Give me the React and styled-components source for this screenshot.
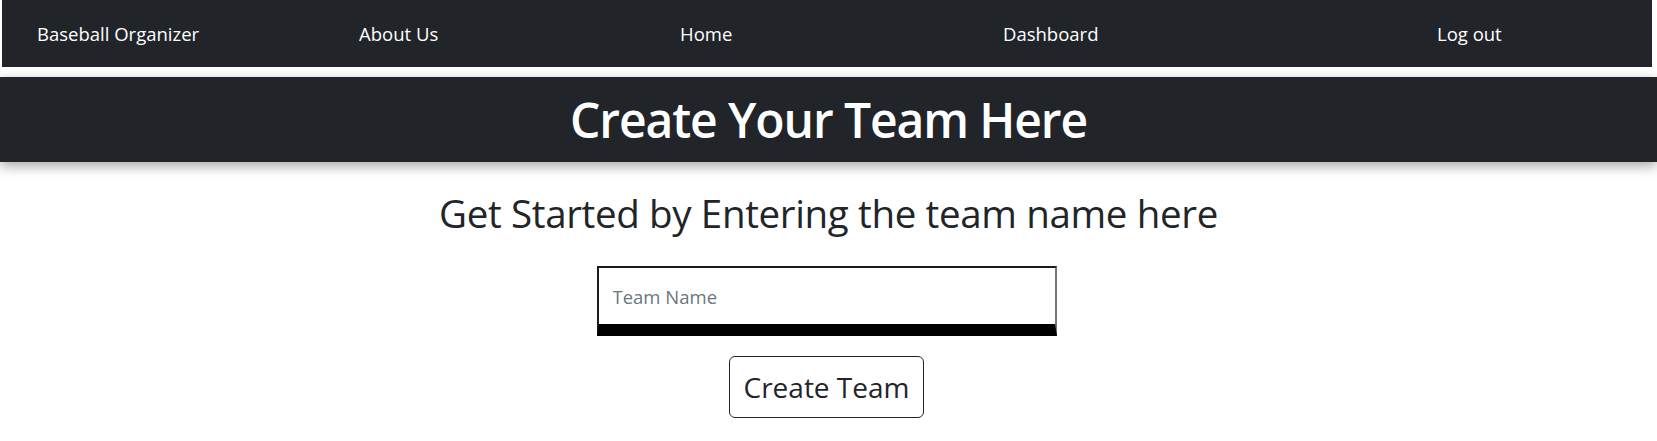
import React from "react";
import styled, { createGlobalStyle } from "styled-components";

const GlobalStyle = createGlobalStyle`
  body {
    margin: 0;
    background: #fff;
    font-family: "Open Sans", "Noto Sans", sans-serif;
    color: #212529;
  }
  * { box-sizing: border-box; }
`;

const Nav = styled.nav`
  display: flex;
  align-items: center;
  height: 67px;
  margin: 0 5px 0 2px;
  padding-left: 35px;
  padding-bottom: 1px;
  background-color: #212529;
`;

const NavLink = styled.a`
  flex: 0 0 auto;
  width: ${(p) => (p.w ? `${p.w}px` : "auto")};
  color: #fff;
  font-size: 18.5px;
  text-decoration: none;
  white-space: nowrap;
  cursor: pointer;
`;

const Banner = styled.header`
  margin-top: 10px;
  height: 85px;
  display: flex;
  align-items: center;
  justify-content: center;
  background-color: #212529;
  box-shadow: 0 4px 12px rgba(0, 0, 0, 0.35);

  h1 {
    margin: 0;
    color: #fff;
    font-size: 48px;
    font-weight: 600;
    letter-spacing: -1.1px;
  }
`;

const Main = styled.main`
  display: flex;
  flex-direction: column;
  align-items: center;
  padding-top: 28px;
`;

const Subtitle = styled.h2`
  margin: 0;
  font-size: 38.5px;
  font-weight: 400;
  line-height: 1.2;
  letter-spacing: -0.35px;
`;

const TeamInput = styled.input`
  margin: 30px 4px 0 0;
  width: 460px;
  height: 70px;
  padding: 0 14px;
  border-style: solid;
  border-width: 2px 2px 12px 2px;
  border-color: #1b1b1b #767676 #000 #1b1b1b;
  font-family: inherit;
  font-size: 18.5px;
  outline: none;

  &::placeholder {
    color: #6c757d;
  }
`;

const Button = styled.button`
  margin: 20px 4px 0 0;
  width: 195px;
  height: 62px;
  background: #fff;
  border: 1px solid #212529;
  border-radius: 6px;
  color: #212529;
  font-family: inherit;
  font-size: 28px;
  cursor: pointer;
`;

export default function App() {
  return (
    <>
      <GlobalStyle />
      <Nav>
        <NavLink w={322}>Baseball Organizer</NavLink>
        <NavLink w={321}>About Us</NavLink>
        <NavLink w={323}>Home</NavLink>
        <NavLink w={434}>Dashboard</NavLink>
        <NavLink>Log out</NavLink>
      </Nav>
      <Banner>
        <h1>Create Your Team Here</h1>
      </Banner>
      <Main>
        <Subtitle>Get Started by Entering the team name here</Subtitle>
        <TeamInput placeholder="Team Name" />
        <Button>Create Team</Button>
      </Main>
    </>
  );
}
